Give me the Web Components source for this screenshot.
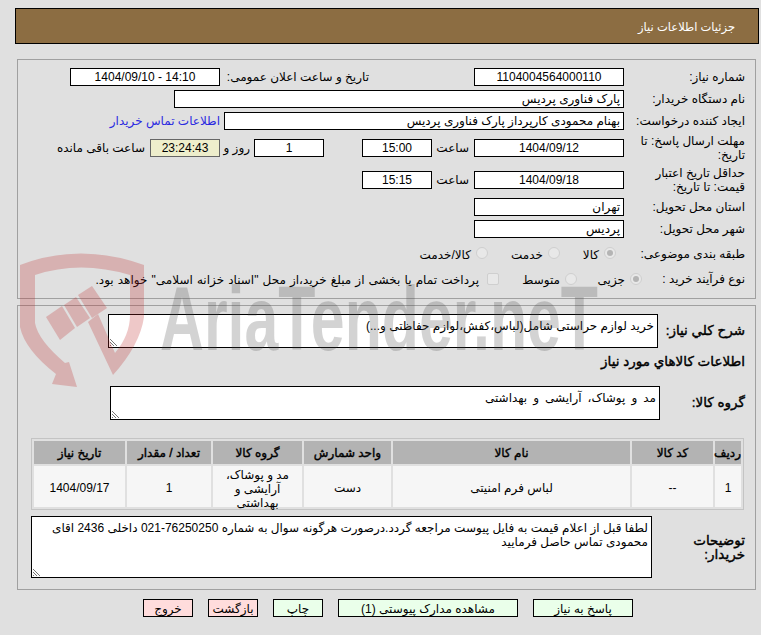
<!DOCTYPE html>
<html dir="rtl" lang="fa">
<head>
<meta charset="utf-8">
<title>جزئیات اطلاعات نیاز</title>
<style>
html, body { margin: 0; height: 100%; overflow: hidden; background: #e0e0e0; }
body { position: relative; padding: 8px 2px 0 15px; box-sizing: border-box; color: #000;
       font: 12px/14px "Liberation Sans", "DejaVu Sans", sans-serif; }
</style>
</head>
<body>
<need-header>جزئیات اطلاعات نیاز</need-header>

<need-panel first>
  <form-row>
    <form-label>شماره نیاز:</form-label>
    <form-field w="150" center>1104004564000110</form-field>
    <form-label nowrap style="--w:254px;--pr:105px;">تاریخ و ساعت اعلان عمومی:</form-label>
    <form-field w="150" center>14:10 - 1404/09/10</form-field>
  </form-row>
  <form-row>
    <form-label>نام دستگاه خریدار:</form-label>
    <form-field w="450">پارک فناوری پردیس</form-field>
  </form-row>
  <form-row>
    <form-label>ایجاد کننده درخواست:</form-label>
    <form-field w="400">بهنام محمودی کارپرداز پارک فناوری پردیس</form-field>
    <form-label nowrap style="--w:auto;--pr:4px;--c:#2a2ae0;">اطلاعات تماس خریدار</form-label>
  </form-row>
  <form-row>
    <form-label>مهلت ارسال پاسخ: تا تاریخ:</form-label>
    <form-field w="150" center>1404/09/12</form-field>
    <form-label nowrap style="--w:42px;--pr:5px;">ساعت</form-label>
    <form-field w="70" center>15:00</form-field>
    <form-label style="--w:38px;"></form-label>
    <form-field w="70" center>1</form-field>
    <form-label nowrap style="--w:34px;--pr:4px;">روز و</form-label>
    <form-field w="70" center timer>23:24:43</form-field>
    <form-label nowrap style="--w:auto;--pr:5px;">ساعت باقی مانده</form-label>
  </form-row>
  <form-row>
    <form-label>حداقل تاریخ اعتبار قیمت: تا تاریخ:</form-label>
    <form-field w="150" center>1404/09/18</form-field>
    <form-label nowrap style="--w:42px;--pr:5px;">ساعت</form-label>
    <form-field w="70" center>15:15</form-field>
  </form-row>
  <form-row>
    <form-label>استان محل تحویل:</form-label>
    <form-field w="150">تهران</form-field>
  </form-row>
  <form-row>
    <form-label>شهر محل تحویل:</form-label>
    <form-field w="150">پردیس</form-field>
  </form-row>
  <form-row tall style="margin-top:1px;height:21px;">
    <form-label>طبقه بندی موضوعی:</form-label>
    <form-option checked style="--w:64px;--pr:8px;">کالا</form-option>
    <form-option style="--w:72px;">خدمت</form-option>
    <form-option style="--w:auto;">کالا/خدمت</form-option>
  </form-row>
  <form-row tall>
    <form-label style="--w:103px;">نوع فرآیند خرید :</form-label>
    <form-option checked style="--w:65px;">جزیی</form-option>
    <form-option style="--w:78px;">متوسط</form-option>
    <form-option square style="--w:auto;word-spacing:.8px;">پرداخت تمام یا بخشی از مبلغ خرید،از محل "اسناد خزانه اسلامی" خواهد بود.</form-option>
  </form-row>
</need-panel>

<need-panel second>
  <form-row>
    <form-label bold nowrap style="--w:87px;">شرح کلي نياز:</form-label>
    <note-box w="550" h="34">خرید لوازم حراستی شامل(لباس،کفش،لوازم حفاظتی و...)</note-box>
  </form-row>
  <form-row style="height:28px;">
    <form-label bold nowrap style="--w:auto;">اطلاعات کالاهاي مورد نياز</form-label>
  </form-row>
  <form-row style="margin-top:10px;">
    <form-label bold nowrap style="--w:85px;">گروه کالا:</form-label>
    <note-box w="550" h="34" style="word-spacing:2.7px;">مد و پوشاک، آرایشی و بهداشتی</note-box>
  </form-row>
  <items-table></items-table>
  <form-row style="margin-top:6px;">
    <form-label bold style="--w:93px;padding-top:2px;">توضیحات<br>خریدار:</form-label>
    <note-box w="621" h="62">لطفا قبل از اعلام قیمت به فایل پیوست مراجعه گردد.درصورت هرگونه سوال به شماره 76250250-021 داخلی 2436 اقای محمودی تماس حاصل فرمایید</note-box>
  </form-row>
</need-panel>

<action-bar>
  <action-button w="100">پاسخ به نیاز</action-button>
  <action-button w="180">مشاهده مدارک پیوستی (1)</action-button>
  <action-button w="50">چاپ</action-button>
  <action-button w="50" danger>بازگشت</action-button>
  <action-button w="50" danger>خروج</action-button>
</action-bar>

<site-watermark></site-watermark>

<script>
class NeedHeader extends HTMLElement {
  constructor() {
    super();
    this.attachShadow({ mode: 'open' }).innerHTML = `
      <style>
      :host { display: flex; align-items: center; box-sizing: border-box; height: 36px;
              padding: 1px 23px 0 0; background: #8c6d42; border: 1px solid #000; color: #fff; font-size: 11.5px; }
      </style><slot></slot>`;
  }
}
customElements.define('need-header', NeedHeader);

class NeedPanel extends HTMLElement {
  constructor() {
    super();
    this.attachShadow({ mode: 'open' }).innerHTML = `
      <style>
      :host { display: flex; flex-direction: column; gap: 4px; box-sizing: border-box;
              margin: 6px 3px 0 2px; padding: 8px 10px 0 0; border: 1px solid #a0a0a0; }
      :host([first]) { margin-top: 15px; height: 240px; }
      :host([second]) { gap: 0; height: 285px; }
      </style><slot></slot>`;
  }
}
customElements.define('need-panel', NeedPanel);

class FormRow extends HTMLElement {
  constructor() {
    super();
    this.attachShadow({ mode: 'open' }).innerHTML = `
      <style>
      :host { display: flex; align-items: center; }
      :host([tall]) { height: 22px; }
      </style><slot></slot>`;
  }
}
customElements.define('form-row', FormRow);

class FormLabel extends HTMLElement {
  constructor() {
    super();
    this.attachShadow({ mode: 'open' }).innerHTML = `
      <style>
      :host { display: block; box-sizing: border-box; flex: none; width: var(--w, 121px);
              padding-right: var(--pr, 0); color: var(--c, #000); }
      :host([nowrap]) { white-space: nowrap; }
      :host([bold]) { font-size: 13.5px; -webkit-text-stroke: .4px #000; }
      </style><slot></slot>`;
  }
}
customElements.define('form-label', FormLabel);

class FormField extends HTMLElement {
  constructor() {
    super();
    this.attachShadow({ mode: 'open' }).innerHTML = `
      <style>
      :host { display: block; box-sizing: border-box; flex: none; height: 18px; padding: 1px 3px;
              background: #fff; border: 1px solid #000; white-space: nowrap; line-height: 15px; }
      :host([center]) { text-align: center; }
      :host([timer]) { background: #eeeecc; border-color: #666; }
      </style><slot></slot>`;
    this.style.width = this.getAttribute('w') + 'px';
  }
}
customElements.define('form-field', FormField);

class FormOption extends HTMLElement {
  constructor() {
    super();
    this.attachShadow({ mode: 'open' }).innerHTML = `
      <style>
      :host { display: flex; align-items: center; flex: none; gap: 5px; box-sizing: border-box;
              width: var(--w, auto); padding-top: 2px; padding-right: var(--pr, 0); white-space: nowrap; }
      #mark { flex: none; box-sizing: border-box; width: 12px; height: 12px; margin-top: -3px;
              border: 1px solid #cfcfcf; border-radius: 50%; background: #e8e8e8;
              display: flex; align-items: center; justify-content: center; }
      :host([square]) { gap: 8px; }
      :host([square]) #mark { border-radius: 2px; }
      :host([checked]) #mark::after { content: ''; width: 6px; height: 6px; border-radius: 50%; background: #b4b4b4; }
      </style><span id="mark"></span><slot></slot>`;
  }
}
customElements.define('form-option', FormOption);

class NoteBox extends HTMLElement {
  constructor() {
    super();
    this.attachShadow({ mode: 'open' }).innerHTML = `
      <style>
      :host { display: block; position: relative; box-sizing: border-box; flex: none;
              padding: 4px 3px 0 3px; background: #fff; border: 1px solid #000; line-height: 14px; }
      svg { position: absolute; left: 0; bottom: 0; }
      </style><slot></slot>
      <svg width="9" height="9" viewBox="0 0 9 9" stroke="#777" fill="none">
        <path d="M1 1l7 7M1 4l4 4M1 7l1 1"/>
      </svg>`;
    this.style.width = this.getAttribute('w') + 'px';
    this.style.height = this.getAttribute('h') + 'px';
  }
}
customElements.define('note-box', NoteBox);

const tableTemplate = document.createElement('template');
tableTemplate.innerHTML = `
  <style>
  :host { display: block; margin: 18px 1px 0 0; }
  table { border-collapse: separate; border-spacing: 2px; border: 1px solid #c4c4c4; table-layout: fixed; width: 713px; }
  th { height: 23px; padding: 0; background: #b3b3b3; font-weight: normal; -webkit-text-stroke: .4px #000; }
  td { box-sizing: border-box; height: 41px; padding: 3px 0 0; background: #f6f6f6; text-align: center; }
  td.wrap { vertical-align: top; padding-top: 2px; }
  td.wrap div { height: 39px; }
  </style>
  <table>
    <colgroup>
      <col style="width:26px"><col style="width:81px"><col style="width:237px"><col style="width:87px">
      <col style="width:89px"><col style="width:84px"><col style="width:91px">
    </colgroup>
    <tr><th>ردیف</th><th>کد کالا</th><th>نام کالا</th><th>واحد شمارش</th><th>گروه کالا</th><th>تعداد / مقدار</th><th>تاریخ نیاز</th></tr>
    <tr><td>1</td><td>--</td><td>لباس فرم امنیتی</td><td>دست</td><td class="wrap"><div>مد و پوشاک،<br>آرایشی و<br>بهداشتی</div></td><td>1</td><td>1404/09/17</td></tr>
  </table>`;

class ItemsTable extends HTMLElement {
  constructor() {
    super();
    this.attachShadow({ mode: 'open' }).appendChild(tableTemplate.content.cloneNode(true));
  }
}
customElements.define('items-table', ItemsTable);

class ActionBar extends HTMLElement {
  constructor() {
    super();
    this.attachShadow({ mode: 'open' }).innerHTML = `
      <style>
      :host { display: flex; gap: 15px; margin: 9px 126px 0 0; }
      </style><slot></slot>`;
  }
}
customElements.define('action-bar', ActionBar);

class ActionButton extends HTMLElement {
  constructor() {
    super();
    this.attachShadow({ mode: 'open' }).innerHTML = `
      <style>
      :host { display: flex; align-items: center; justify-content: center; box-sizing: border-box;
              height: 18px; padding-top: 1px; background: #eaffea; border: 1px solid #000; white-space: nowrap; }
      :host([danger]) { background: #ffdcdc; }
      </style><slot></slot>`;
    this.style.width = this.getAttribute('w') + 'px';
  }
}
customElements.define('action-button', ActionButton);

// faded logo and site name that lie over the form
class SiteWatermark extends HTMLElement {
  constructor() {
    super();
    this.attachShadow({ mode: 'open' }).innerHTML = `
      <style>
      :host { position: absolute; left: 0; top: 0; width: 761px; height: 635px; pointer-events: none; }
      svg { display: block; }
      text { font-family: "Liberation Sans", sans-serif; font-weight: bold; }
      </style>
      <svg width="761" height="635" viewBox="0 0 761 635" direction="ltr">
        <g fill="#be2828" opacity=".25">
          <path d="M20 265Q80 242 144 265V317Q140 345 113 375L88 322L98 314L115 353Q130 335 130 315V275Q80 260 35 275V323Q38 340 65 363L69 362L77 387L52 384L56 374Q25 350 20 327Z"/>
          <path d="M46 317L62 306L75 328L60 340Z"/>
          <path d="M64 305L76 297L90 318L77 327Z"/>
          <path d="M78 295L92 286L107 308L92 318Z"/>
        </g>
        <text x="160" y="350" font-size="90" fill="#464646" opacity=".23" textLength="438" lengthAdjust="spacingAndGlyphs">AriaTender.neT</text>
      </svg>`;
  }
}
customElements.define('site-watermark', SiteWatermark);
</script>
</body>
</html>
